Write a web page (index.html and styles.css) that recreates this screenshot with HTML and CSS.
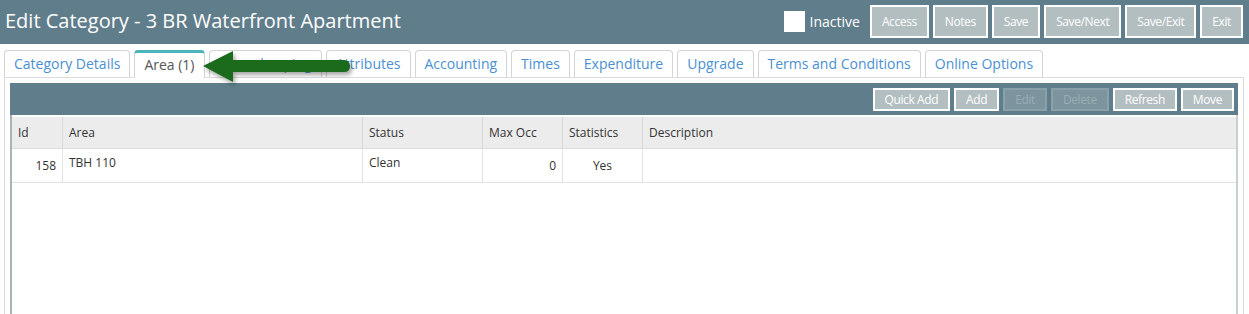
FILE: index.html
```html
<!DOCTYPE html>
<html lang="en">
<head>
    <meta charset="UTF-8">
    <meta name="viewport" content="width=device-width, initial-scale=1.0">
    <title>Edit Category</title>
    <link rel="stylesheet" href="styles.css">
</head>
<body>
    <div class="header">
        <h1>Edit Category - 3 BR Waterfront Apartment</h1>
        <div class="header-actions">
            <label class="inactive"><span class="check"></span>Inactive</label>
            <button class="btn">Access</button>
            <button class="btn">Notes</button>
            <button class="btn">Save</button>
            <button class="btn">Save/Next</button>
            <button class="btn">Save/Exit</button>
            <button class="btn">Exit</button>
        </div>
    </div>

    <div class="tabs">
        <a class="tab">Category Details</a>
        <a class="tab active">Area (1)</a>
        <a class="tab">Housekeeping</a>
        <a class="tab">Attributes</a>
        <a class="tab">Accounting</a>
        <a class="tab">Times</a>
        <a class="tab">Expenditure</a>
        <a class="tab">Upgrade</a>
        <a class="tab">Terms and Conditions</a>
        <a class="tab">Online Options</a>
    </div>

    <div class="panel">
        <div class="toolbar">
            <button class="btn small">Quick Add</button>
            <button class="btn small">Add</button>
            <button class="btn small disabled">Edit</button>
            <button class="btn small disabled">Delete</button>
            <button class="btn small">Refresh</button>
            <button class="btn small">Move</button>
        </div>
        <div class="grid">
            <table>
                <thead>
                    <tr>
                        <th class="c-id">Id</th>
                        <th class="c-area">Area</th>
                        <th class="c-status">Status</th>
                        <th class="c-max">Max Occ</th>
                        <th class="c-stats">Statistics</th>
                        <th>Description</th>
                    </tr>
                </thead>
                <tbody>
                    <tr>
                        <td class="num">158</td>
                        <td>TBH 110</td>
                        <td>Clean</td>
                        <td class="num">0</td>
                        <td class="center">Yes</td>
                        <td></td>
                    </tr>
                </tbody>
            </table>
        </div>
    </div>

    <!-- pointer arrow over the tabs -->
    <svg class="arrow" width="170" height="46" viewBox="0 0 170 46">
        <defs>
            <filter id="shadow" x="-10%" y="-30%" width="130%" height="170%">
                <feDropShadow dx="2" dy="3" stdDeviation="2" flood-color="#000" flood-opacity="0.35"/>
            </filter>
        </defs>
        <path d="M2 20 L32 5 L32 14 L143 14 Q149 14 149 20 Q149 26 143 26 L32 26 L32 36 Z" fill="#1a6b1f" filter="url(#shadow)"/>
    </svg>
</body>
</html>
```

FILE: styles.css
```css
body {
    margin: 0;
    font-family: 'Open Sans', sans-serif;
    background: #fff;
    height: 314px;
    overflow: hidden;
    position: relative;
}

.header {
    background-color: #607d8b;
    height: 44px;
    display: flex;
    align-items: center;
    justify-content: space-between;
    padding: 0 6px 0 5px;
}

.header h1 {
    margin: 0;
    color: #fff;
    font-size: 20px;
    font-weight: normal;
    margin-top: -3px;
}

.header-actions {
    display: flex;
    align-items: center;
    gap: 4px;
    margin-top: -2px;
}

.inactive {
    display: flex;
    align-items: center;
    color: #fff;
    font-size: 14px;
    margin-right: 6px;
}

.check {
    width: 21px;
    height: 21px;
    background: #fff;
    margin-right: 5px;
}

.btn {
    background-color: #b3bec1;
    color: #fff;
    border: 2px solid #fff;
    font-family: 'Open Sans', sans-serif;
    font-size: 12px;
    letter-spacing: -0.4px;
    height: 33px;
    padding: 0 10px;
    cursor: pointer;
}

.btn.small {
    height: 23px;
    padding: 0 10px;
    font-size: 12px;
}

.btn.disabled {
    background-color: #7b949e;
    border-color: #8aa1aa;
    color: #99adb5;
}

.tabs {
    display: flex;
    gap: 4px;
    padding: 6px 0 0 4px;
    position: relative;
    z-index: 1;
}

.tab {
    height: 26px;
    line-height: 26px;
    padding: 0 9px;
    border: 1px solid #d4d4d4;
    border-bottom: none;
    border-radius: 4px 4px 0 0;
    font-size: 14px;
    color: #4a90d2;
    background: #fff;
}

.tab.active {
    color: #555;
    border-top: 3px solid #4bb4bd;
    height: 25px;
    line-height: 23px;
    margin-bottom: -1px;
    position: relative;
}

.panel {
    border: 1px solid #dcdcdc;
    border-bottom: none;
    margin: 0 5px 0 4px;
    padding: 5px 5px 0 5px;
    height: 231px;
}

.toolbar {
    background-color: #607d8b;
    height: 32px;
    display: flex;
    justify-content: flex-end;
    align-items: center;
    gap: 4px;
    padding: 0 4px;
}

.grid {
    border-left: 2px solid #a9b5b5;
    border-right: 2px solid #c9cfcf;
    height: 197px;
    padding-top: 2px;
}

table {
    width: 100%;
    border-collapse: collapse;
    font-size: 12px;
    color: #333;
}

th {
    background-color: #ececec;
    font-weight: normal;
    text-align: left;
    height: 31px;
    padding: 0 6px;
    border-right: 1px solid #d8d8d8;
    border-bottom: 1px solid #dcdcdc;
}

td {
    height: 34px;
    padding: 5px 6px 0;
    vertical-align: top;
    border-right: 1px solid #e2e2e2;
    border-bottom: 1px solid #e2e2e2;
    box-sizing: border-box;
}

th:last-child, td:last-child {
    border-right: none;
}

.num {
    text-align: right;
    padding-top: 8px;
}

.center {
    text-align: center;
    padding-top: 8px;
}

.c-id { width: 38px; }
.c-area { width: 287px; }
.c-status { width: 107px; }
.c-max { width: 67px; }
.c-stats { width: 67px; }

.arrow {
    position: absolute;
    left: 201px;
    top: 46px;
    z-index: 2;
}
```
